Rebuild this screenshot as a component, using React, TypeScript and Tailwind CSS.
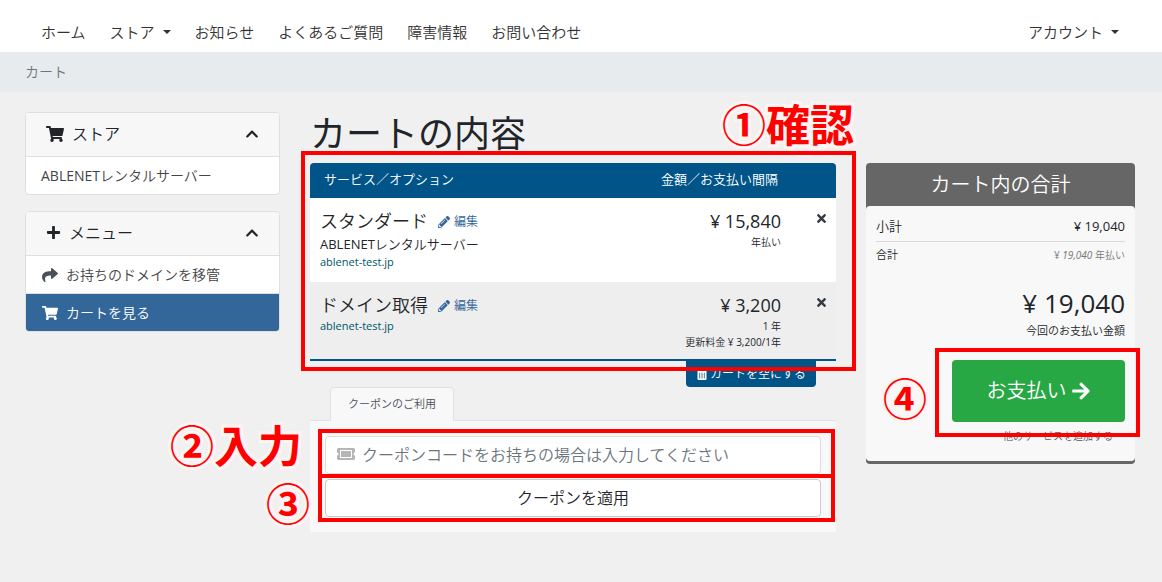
import { ReactNode, useState } from 'react';
import {
  FaArrowRight,
  FaChevronUp,
  FaPencilAlt,
  FaPlus,
  FaShare,
  FaShoppingCart,
  FaTicketAlt,
  FaTimes,
  FaTrashAlt,
} from 'react-icons/fa';

interface CartItem {
  id: string;
  name: string;
  group?: string;
  domain: string;
  price: string;
  notes: string[];
}

const CART_ITEMS: CartItem[] = [
  {
    id: 'standard',
    name: 'スタンダード',
    group: 'ABLENETレンタルサーバー',
    domain: 'ablenet-test.jp',
    price: '¥ 15,840',
    notes: ['年払い'],
  },
  {
    id: 'domain',
    name: 'ドメイン取得',
    domain: 'ablenet-test.jp',
    price: '¥ 3,200',
    notes: ['1 年', '更新料金 ¥ 3,200/1年'],
  },
];

const NAV_LINKS = [
  { label: 'ホーム' },
  { label: 'ストア', dropdown: true },
  { label: 'お知らせ' },
  { label: 'よくあるご質問' },
  { label: '障害情報' },
  { label: 'お問い合わせ' },
];

function Caret() {
  return <span className="ml-2 border-x-4 border-t-4 border-x-transparent border-t-current" />;
}

// Red frame around the parent element, with its step label
function Step({ frame, label, position }: { frame: string; label: string; position: string }) {
  return (
    <div className={`pointer-events-none absolute z-10 border-4 border-[#ff0000] ${frame}`}>
      <span
        className={`absolute whitespace-nowrap font-['Open_Sans','Noto_Sans_CJK_JP',sans-serif] text-[44px] leading-[44px] font-bold text-[#ff0000] [paint-order:stroke_fill] [-webkit-text-stroke:6px_#fff4f4] ${position}`}
      >
        {label}
      </span>
    </div>
  );
}

function SideCard({ icon, title, children }: { icon: ReactNode; title: string; children: ReactNode }) {
  const [open, setOpen] = useState(true);

  return (
    <section className="overflow-hidden rounded border border-[#dfdfdf] bg-white">
      <button
        type="button"
        aria-expanded={open}
        onClick={() => setOpen(!open)}
        className="flex h-[43px] w-full items-center gap-2 bg-[#f7f7f7] px-5 pb-0.5"
      >
        {icon}
        <span>{title}</span>
        <FaChevronUp className={`ml-auto size-3.5 ${open ? '' : 'rotate-180'}`} />
      </button>
      {open && <ul className="text-sm text-[#444]">{children}</ul>}
    </section>
  );
}

export default function App() {
  const [coupon, setCoupon] = useState('');

  return (
    <div className="min-h-screen bg-[#f0f0f0] font-['Open_Sans','Noto_Sans_CJK_JP_DemiLight','Noto_Sans_CJK_JP_Light','Noto_Sans_CJK_JP',sans-serif] text-[#212529]">
      <nav className="flex h-[52px] items-end justify-between bg-white pr-[43px] pb-2 pl-[41px] text-[15px] leading-6 text-[#333]">
        <ul className="flex gap-6">
          {NAV_LINKS.map((link) => (
            <li key={link.label}>
              <a href="#" className="flex items-center">
                {link.label}
                {link.dropdown && <Caret />}
              </a>
            </li>
          ))}
        </ul>
        <a href="#" className="flex items-center">
          アカウント
          <Caret />
        </a>
      </nav>

      <div className="flex h-10 items-center bg-[#e8ebee] px-[25px] text-sm text-[#6c757d]">カート</div>

      <div className="grid grid-cols-[255fr_526fr_269fr] items-start gap-[30px] pt-5 pr-[27px] pb-12 pl-[25px]">
        {/* Sidebar */}
        <aside className="flex flex-col gap-4">
          <SideCard icon={<FaShoppingCart className="size-[18px]" />} title="ストア">
            <li className="border-t border-[#dfdfdf]">
              <a href="#" className="flex h-[37px] items-center px-[15px]">
                ABLENETレンタルサーバー
              </a>
            </li>
          </SideCard>
          <SideCard icon={<FaPlus className="size-[15px]" />} title="メニュー">
            <li className="border-t border-[#dfdfdf]">
              <a href="#" className="flex h-[37px] items-center gap-2 px-4">
                <FaShare className="size-4 text-[#495057]" />
                お持ちのドメインを移管
              </a>
            </li>
            <li className="border-t border-[#dfdfdf]">
              <a href="#" className="flex h-[37px] items-center gap-2 bg-[#336699] px-4 text-white">
                <FaShoppingCart className="size-4" />
                カートを見る
              </a>
            </li>
          </SideCard>
        </aside>

        {/* Cart */}
        <main>
          <h1 className="mb-2 font-['Open_Sans','Noto_Sans_CJK_JP',sans-serif] text-[36px] leading-[43px]">カートの内容</h1>

          <div className="relative">
            <table className="w-full border-b-2 border-[#005488]">
              <thead>
                <tr className="h-[35px] text-left text-[13px] text-white">
                  <th className="rounded-tl bg-[#005488] pb-0.5 pl-3.5 font-normal">サービス／オプション</th>
                  <th className="bg-[#005488] pr-[3px] pb-0.5 text-right font-normal">金額／お支払い間隔</th>
                  <th className="w-[55px] rounded-tr bg-[#005488]" />
                </tr>
              </thead>
              <tbody>
                {CART_ITEMS.map((item) => (
                  <tr key={item.id} className="bg-white align-top even:bg-[#eee]">
                    <td className="pt-2.5 pb-3 pl-2.5">
                      <div className="flex items-center gap-2.5 text-lg leading-[26px]">
                        {item.name}
                        <a href="#" className="flex items-center gap-1 pt-0.5 text-xs text-[#336699]">
                          <FaPencilAlt />
                          編集
                        </a>
                      </div>
                      {item.group && <p className="text-[13px] leading-5">{item.group}</p>}
                      <p className="text-[11px] leading-4 text-[#00556b]">{item.domain}</p>
                    </td>
                    <td className="pt-2.5 pb-[9px] text-right">
                      <p className="text-lg leading-[26px]">{item.price}</p>
                      {item.notes.map((note) => (
                        <p key={note} className="text-[10px] leading-4">
                          {note}
                        </p>
                      ))}
                    </td>
                    <td className="pt-3.5 pr-2 text-right">
                      <button type="button" aria-label="削除" className="align-top text-[#333b44]">
                        <FaTimes className="size-[13px]" />
                      </button>
                    </td>
                  </tr>
                ))}
              </tbody>
            </table>
            <Step frame="-top-3 -right-5 -bottom-2.5 -left-[9px]" label="①確認" position="-right-0.5 bottom-full mb-2" />
          </div>

          <div className="flex justify-end pr-5">
            <button
              type="button"
              className="flex h-[26px] items-center gap-0.5 rounded-b bg-[#005488] px-2.5 text-xs text-white"
            >
              <FaTrashAlt />
              カートを空にする
            </button>
          </div>

          <div className="flex border-b border-[#dee2e6] pl-5">
            <button
              type="button"
              className="-mb-px h-[34px] rounded-t border border-b-0 border-[#dee2e6] bg-[#f8f8f8] px-[17px] text-[11px] text-[#495057]"
            >
              クーポンのご利用
            </button>
          </div>
          <div className="flex flex-col gap-[5px] bg-[#f8f8f8] p-[15px]">
            <div className="relative">
              <label htmlFor="coupon" className="absolute top-[9px] left-3 text-[#b5b5b5]">
                <FaTicketAlt className="size-[18px]" />
              </label>
              <input
                id="coupon"
                type="text"
                aria-label="クーポンコード"
                value={coupon}
                onChange={(e) => setCoupon(e.target.value)}
                placeholder="クーポンコードをお持ちの場合は入力してください"
                className="block h-[38px] w-full rounded border border-[#ddd] bg-white pr-3 pl-9 text-base placeholder:text-[#6c757d]"
              />
              <Step frame="-top-[7px] -right-3.5 -bottom-1 -left-[7px]" label="②入力" position="right-full bottom-1.5 mr-5" />
            </div>
            <div className="relative">
              <button
                type="button"
                className="block h-[38px] w-full rounded border border-[#ccc] bg-white text-base text-[#212529]"
              >
                クーポンを適用
              </button>
              <Step frame="-top-[5px] -right-3.5 -bottom-[5px] -left-[7px]" label="③" position="right-full -bottom-2 mr-3" />
            </div>
          </div>
        </main>

        {/* Order summary */}
        <section className="mt-[51px] rounded border-b-[3px] border-[#666] bg-[#666]">
          <h2 className="flex h-[43px] items-center justify-center text-xl text-white">カート内の合計</h2>
          <div className="rounded bg-[#f8f8f8] px-2.5 pt-2.5 pb-[17px]">
            <div className="flex justify-between border-b border-[#d9d9d9] pb-[5px] text-[13px] leading-5">
              <span>小計</span>
              <span>¥ 19,040</span>
            </div>
            <div className="flex justify-between pt-[3px] leading-5">
              <span className="text-[11px]">合計</span>
              <span className="text-[10px] text-[#777]">
                ¥ <em>19,040</em> 年払い
              </span>
            </div>
            <p className="mt-[18px] text-right text-[26px] leading-10">¥ 19,040</p>
            <p className="text-right text-[11px] leading-4">今回のお支払い金額</p>
            <div className="relative mt-[21px] ml-auto w-[173px]">
              <button
                type="button"
                className="flex h-[62px] w-full items-center justify-center gap-1 rounded bg-[#28a745] text-xl text-white"
              >
                お支払い
                <FaArrowRight />
              </button>
              <Step frame="-top-3 -right-[15px] -bottom-[15px] -left-[17px]" label="④" position="right-full bottom-3 mr-3" />
            </div>
            <p className="mt-1.5 pr-3 text-right text-[10px] leading-4 text-[#555]">
              <a href="#">他のサービスを追加する</a>
            </p>
          </div>
        </section>
      </div>
    </div>
  );
}
